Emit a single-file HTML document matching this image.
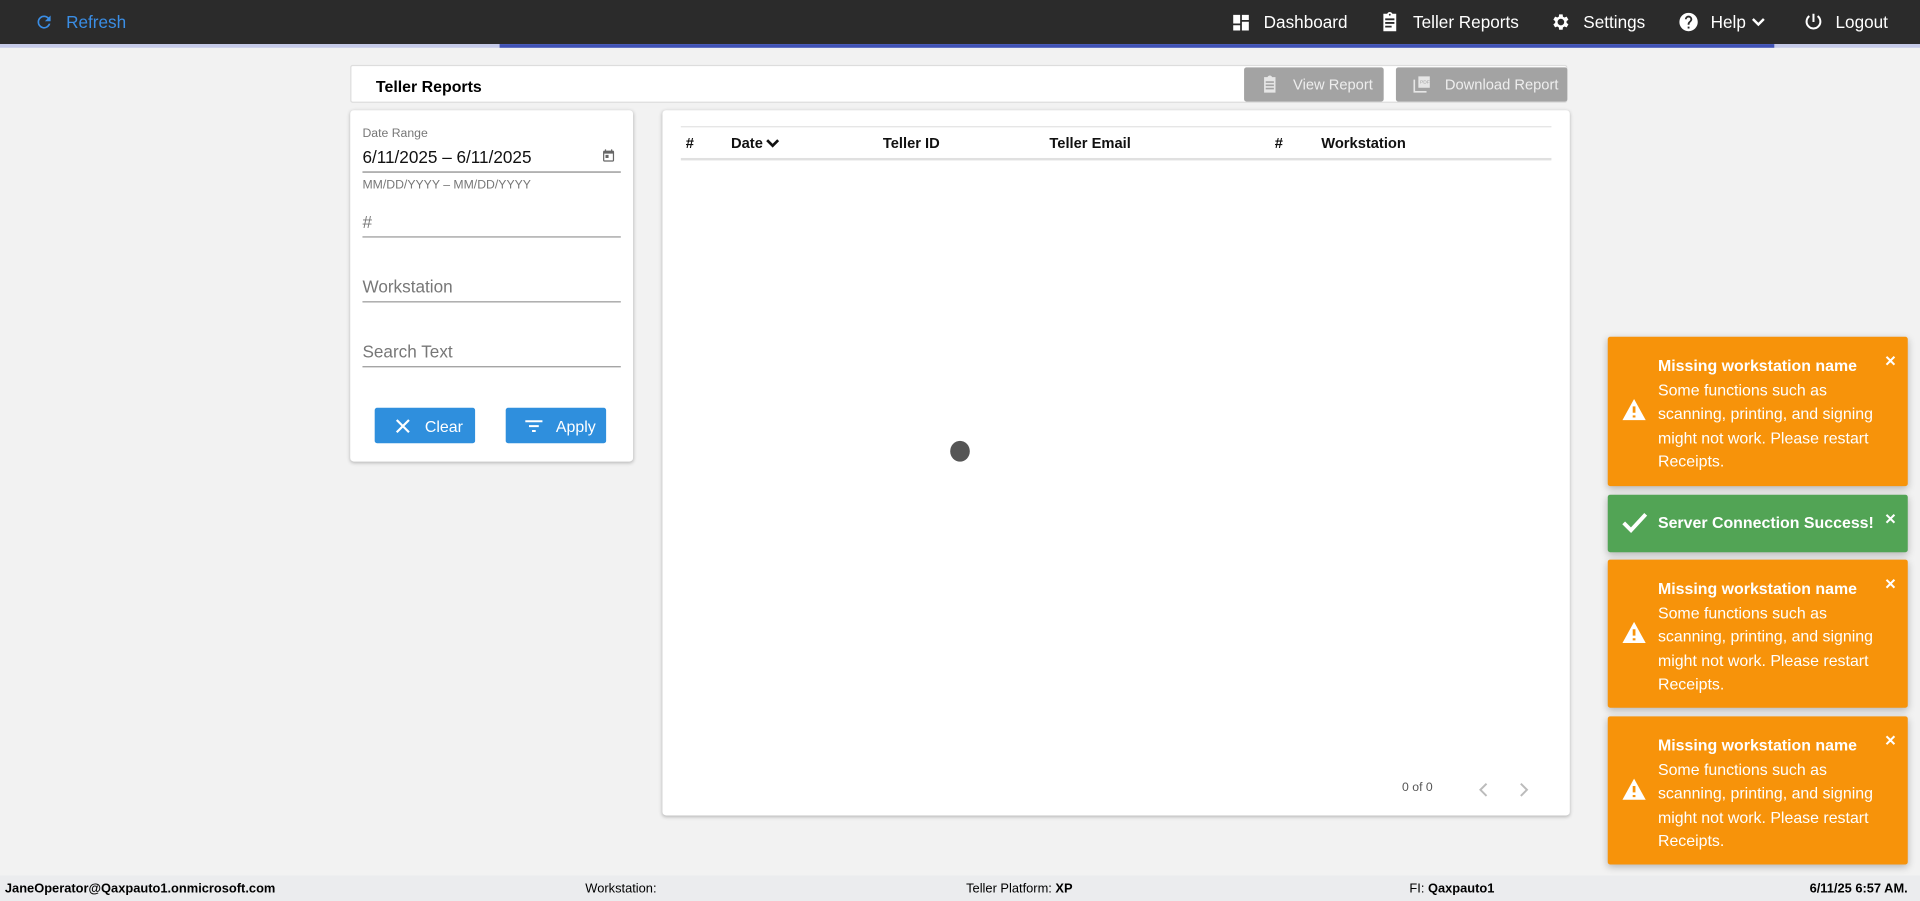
<!DOCTYPE html>
<html><head><meta charset="utf-8">
<style>
html,body{margin:0;padding:0;width:1920px;height:901px;overflow:hidden;background:#f2f2f2;font-family:"Liberation Sans",sans-serif;}
#s{position:absolute;left:0;top:0;width:1568px;height:736px;transform:scale(1.22449);transform-origin:0 0;background:#f2f2f2;}
.a{position:absolute;}
.nav{left:0;top:0;width:1568px;height:36px;background:#2b2b2b;}
.nt{color:#fff;font-size:14px;top:10px;}
.card{background:#fff;box-shadow:0 1px 3px rgba(0,0,0,.25);border-radius:3px;}
.lbl{color:#777;font-size:14px;}
.btn{background:#2f8fdd;color:#fff;font-size:13px;border-radius:2px;}
.th{font-size:12px;font-weight:bold;top:110px;color:#111;}
.toast{left:1313px;width:245px;background:#f7930a;border-radius:2px;box-shadow:0 2px 6px rgba(0,0,0,.25);color:#fff;font-family:"Liberation Sans",sans-serif;}
.toast .t{position:absolute;left:41px;top:14px;font-size:13px;line-height:19.6px;}
.toast b{font-weight:bold;}
.toast .x{position:absolute;right:9px;top:13px;font-size:12px;font-weight:bold;}
.ft{font-size:10.5px;top:720px;color:#000;}
</style></head><body><div id="s">
<div class="a nav"></div>
<div class="a" style="left:0;top:36px;width:1568px;height:3px;background:#c5cae9"></div>
<div class="a" style="left:408px;top:36px;width:1041px;height:3px;background:#3f51b5"></div>
<svg class="a" style="left:28px;top:10px" width="16" height="16" viewBox="0 0 24 24"><path fill="#3a8ee6" d="M17.65 6.35A7.95 7.95 0 0 0 12 4a8 8 0 1 0 7.73 10h-2.08A6 6 0 1 1 12 6c1.66 0 3.14.69 4.22 1.78L13 11h7V4l-2.35 2.35z"/></svg>
<div class="a nt" style="left:54px;color:#3a8ee6">Refresh</div>
<svg class="a" style="left:1005px;top:10px" width="17" height="17" viewBox="0 0 24 24"><path fill="#fff" d="M3 13h8V3H3v10zm0 8h8v-6H3v6zm10 0h8V11h-8v10zm0-18v6h8V3h-8z"/></svg>
<div class="a nt" style="left:1032px">Dashboard</div>
<svg class="a" style="left:1126px;top:9px" width="18" height="18" viewBox="0 0 24 24"><path fill="#fff" d="M19 3h-4.18C14.4 1.84 13.3 1 12 1s-2.4.84-2.82 2H5v19h14V3zm-7 0c.55 0 1 .45 1 1s-.45 1-1 1-1-.45-1-1 .45-1 1-1zm2 15H7v-2h7v2zm3-4H7v-2h10v2zm0-4H7V8h10v2z"/></svg>
<div class="a nt" style="left:1154px">Teller Reports</div>
<svg class="a" style="left:1265px;top:9px" width="18" height="18" viewBox="0 0 24 24"><path fill="#fff" d="M19.14 12.94a7.1 7.1 0 0 0 0-1.88l2.03-1.58-1.920-3.32-2.39.96a7 7 0 0 0-1.62-.94L14.88 3.6h-3.84l-.36 2.58c-.58.24-1.120.55-1.620.94l-2.39-.96-1.92 3.32 2.03 1.58a7.1 7.1 0 0 0 0 1.88l-2.03 1.58 1.92 3.32 2.39-.96c.5.39 1.04.7 1.62.94l.36 2.58h3.84l.36-2.58c.58-.24 1.12-.55 1.62-.94l2.39.96 1.92-3.32-2.03-1.58zM12.96 15.6a3.6 3.6 0 1 1 0-7.2 3.6 3.6 0 0 1 0 7.2z"/></svg>
<div class="a nt" style="left:1293px">Settings</div>
<svg class="a" style="left:1370px;top:9px" width="18" height="18" viewBox="0 0 24 24"><path fill="#fff" d="M12 2a10 10 0 1 0 0 20 10 10 0 0 0 0-20zm1 17h-2v-2h2v2zm2.07-7.75-.9.92C13.45 12.9 13 13.5 13 15h-2v-.5c0-1.1.45-2.1 1.17-2.83l1.24-1.26A2 2 0 0 0 14 9a2 2 0 0 0-4 0H8a4 4 0 0 1 8 0c0 .88-.36 1.68-.93 2.25z"/></svg>
<div class="a nt" style="left:1397px">Help</div>
<svg class="a" style="left:1430px;top:13px" width="12" height="10" viewBox="0 0 12 10"><path d="M1.5 2.5 6 7l4.5-4.5" stroke="#fff" stroke-width="2" fill="none"/></svg>
<svg class="a" style="left:1472px;top:9px" width="18" height="18" viewBox="0 0 24 24"><path fill="none" stroke="#fff" stroke-width="2.2" d="M12 3v9M7.5 5.5a7.5 7.5 0 1 0 9 0"/></svg>
<div class="a nt" style="left:1499px">Logout</div>

<div class="a" style="left:286px;top:53px;width:994px;height:31px;background:#fff;border:1px solid #ddd;box-sizing:border-box;border-radius:2px"></div>
<div class="a" style="left:307px;top:63px;font-size:13px;font-weight:bold">Teller Reports</div>
<div class="a" style="left:1016px;top:55px;width:114px;height:28px;background:#a3a3a3;border-radius:2px"></div>
<svg class="a" style="left:1029px;top:61px" width="16" height="16" viewBox="0 0 24 24"><path fill="#e6e6e6" d="M19 3h-4.18C14.4 1.84 13.3 1 12 1s-2.4.84-2.82 2H5v19h14V3zm-2 15H7v-2h10v2zm0-4H7v-2h10v2zm0-4H7V8h10v2z"/></svg>
<div class="a" style="left:1056px;top:62px;font-size:12px;color:#eee">View Report</div>
<div class="a" style="left:1140px;top:55px;width:140px;height:28px;background:#a3a3a3;border-radius:2px"></div>
<svg class="a" style="left:1153px;top:61px" width="16" height="16" viewBox="0 0 24 24"><path fill="#e6e6e6" d="M20 2H8v14h14V2h-2zM4 6H2v16h16v-2H4V6z"/><text x="10" y="11" font-size="6" fill="#a3a3a3" font-family="Liberation Sans">PDF</text></svg>
<div class="a" style="left:1180px;top:62px;font-size:12px;color:#eee">Download Report</div>

<div class="a card" style="left:286px;top:90px;width:231px;height:287px"></div>
<div class="a" style="left:296px;top:104px;font-size:10px;color:#777">Date Range</div>
<div class="a" style="left:296px;top:120px;font-size:14px;color:#111">6/11/2025 – 6/11/2025</div>
<svg class="a" style="left:491px;top:121px" width="12" height="12" viewBox="0 0 24 24"><path fill="#666" d="M19 4h-1V2h-2v2H8V2H6v2H5a2 2 0 0 0-2 2v14a2 2 0 0 0 2 2h14a2 2 0 0 0 2-2V6a2 2 0 0 0-2-2zm0 16H5V9h14v11zM7 11h5v5H7z"/></svg>
<div class="a" style="left:296px;top:140px;width:211px;height:1px;background:#888"></div>
<div class="a" style="left:296px;top:146px;font-size:10px;color:#777">MM/DD/YYYY – MM/DD/YYYY</div>
<div class="a lbl" style="left:296px;top:173px">#</div>
<div class="a" style="left:296px;top:193px;width:211px;height:1px;background:#999"></div>
<div class="a lbl" style="left:296px;top:226px">Workstation</div>
<div class="a" style="left:296px;top:246px;width:211px;height:1px;background:#999"></div>
<div class="a lbl" style="left:296px;top:279px">Search Text</div>
<div class="a" style="left:296px;top:299px;width:211px;height:1px;background:#999"></div>
<div class="a btn" style="left:306px;top:333px;width:82px;height:29px"></div>
<svg class="a" style="left:322px;top:341px" width="14" height="14" viewBox="0 0 14 14"><path d="M2 2l10 10M12 2 2 12" stroke="#fff" stroke-width="1.8"/></svg>
<div class="a" style="left:347px;top:341px;font-size:13px;color:#fff">Clear</div>
<div class="a btn" style="left:413px;top:333px;width:82px;height:29px"></div>
<svg class="a" style="left:428px;top:341px" width="16" height="14" viewBox="0 0 16 14"><path d="M1 3h14M4 7h8M6.5 11h3" stroke="#fff" stroke-width="1.6"/></svg>
<div class="a" style="left:454px;top:341px;font-size:13px;color:#fff">Apply</div>

<div class="a card" style="left:541px;top:90px;width:741px;height:576px"></div>
<div class="a" style="left:556px;top:103px;width:711px;height:1px;background:#e3e3e3"></div>
<div class="a" style="left:556px;top:129px;width:711px;height:2px;background:#e0e0e0"></div>
<div class="a th" style="left:560px">#</div>
<div class="a th" style="left:597px">Date</div>
<svg class="a" style="left:625px;top:112px" width="12" height="10" viewBox="0 0 12 10"><path d="M1.5 2.5 6 7l4.5-4.5" stroke="#111" stroke-width="2.2" fill="none"/></svg>
<div class="a th" style="left:721px">Teller ID</div>
<div class="a th" style="left:857px">Teller Email</div>
<div class="a th" style="left:1041px">#</div>
<div class="a th" style="left:1079px">Workstation</div>
<div class="a" style="left:776px;top:360px;width:16px;height:17px;border-radius:50%;background:#555"></div>
<div class="a" style="left:1145px;top:638px;font-size:10px;color:#555">0 of 0</div>
<svg class="a" style="left:1206px;top:638px" width="12" height="14" viewBox="0 0 12 14"><path d="M8 2 3 7l5 5" stroke="#bbb" stroke-width="1.6" fill="none"/></svg>
<svg class="a" style="left:1238px;top:638px" width="12" height="14" viewBox="0 0 12 14"><path d="M4 2l5 5-5 5" stroke="#bbb" stroke-width="1.6" fill="none"/></svg>

<div class="a toast" style="top:275px;height:122px"><svg style="position:absolute;left:11px;top:50px" width="21" height="19" viewBox="0 0 24 22"><path fill="#fff" d="M12 1 1 21h22L12 1z"/><path d="M12 8v6M12 16.5v2" stroke="#f7930a" stroke-width="2.6"/></svg><div class="t"><b>Missing workstation name</b><br>Some functions such as<br>scanning, printing, and signing<br>might not work. Please restart<br>Receipts.</div><div class="x">✕</div></div>
<div class="a toast" style="top:404px;height:47px;background:#52a455"><svg style="position:absolute;left:11px;top:14px" width="22" height="18" viewBox="0 0 22 18"><path d="M2 9l6 6L20 2" stroke="#fff" stroke-width="3.2" fill="none"/></svg><div class="t" style="top:13px"><b>Server Connection Success!</b></div><div class="x">✕</div></div>
<div class="a toast" style="top:457px;height:121px"><svg style="position:absolute;left:11px;top:50px" width="21" height="19" viewBox="0 0 24 22"><path fill="#fff" d="M12 1 1 21h22L12 1z"/><path d="M12 8v6M12 16.5v2" stroke="#f7930a" stroke-width="2.6"/></svg><div class="t"><b>Missing workstation name</b><br>Some functions such as<br>scanning, printing, and signing<br>might not work. Please restart<br>Receipts.</div><div class="x">✕</div></div>
<div class="a toast" style="top:585px;height:121px"><svg style="position:absolute;left:11px;top:50px" width="21" height="19" viewBox="0 0 24 22"><path fill="#fff" d="M12 1 1 21h22L12 1z"/><path d="M12 8v6M12 16.5v2" stroke="#f7930a" stroke-width="2.6"/></svg><div class="t"><b>Missing workstation name</b><br>Some functions such as<br>scanning, printing, and signing<br>might not work. Please restart<br>Receipts.</div><div class="x">✕</div></div>

<div class="a" style="left:0;top:715px;width:1568px;height:21px;background:#ebecee"></div>
<div class="a ft" style="left:4px;font-weight:bold">JaneOperator@Qaxpauto1.onmicrosoft.com</div>
<div class="a ft" style="left:478px">Workstation:</div>
<div class="a ft" style="left:789px">Teller Platform: <b>XP</b></div>
<div class="a ft" style="left:1151px">FI: <b>Qaxpauto1</b></div>
<div class="a ft" style="left:1460px;width:98px;text-align:right;font-weight:bold">6/11/25 6:57 AM.</div>
</div></body></html>
